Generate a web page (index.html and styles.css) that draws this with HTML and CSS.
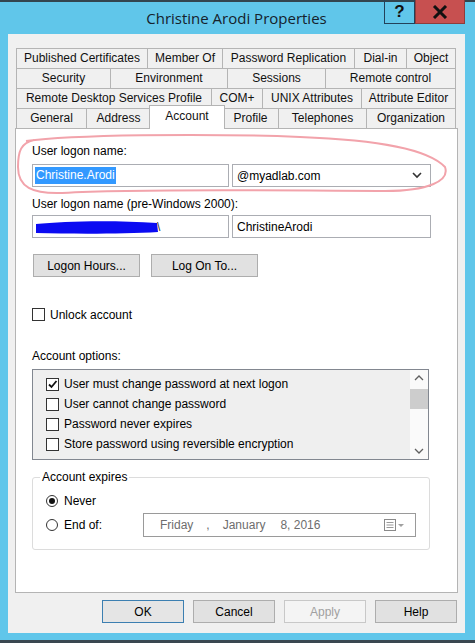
FILE: index.html
```html
<!DOCTYPE html>
<html>
<head>
<meta charset="utf-8">
<title>Christine Arodi Properties</title>
<link rel="stylesheet" href="styles.css">
</head>
<body>
<div class="window">
  <div class="titlebar">
    <span class="title">Christine Arodi Properties</span>
    <div class="caption-btns">
      <div class="cap help">?</div>
      <div class="cap close">
        <svg width="16" height="14" viewBox="0 0 16 14"><path d="M2 1 L14 13 M14 1 L2 13" stroke="#111" stroke-width="3"/></svg>
      </div>
    </div>
  </div>

  <div class="client">
    <div class="tabs">
      <div class="tabrow r1">
        <div class="tab">Published Certificates</div>
        <div class="tab">Member Of</div>
        <div class="tab">Password Replication</div>
        <div class="tab">Dial-in</div>
        <div class="tab">Object</div>
      </div>
      <div class="tabrow r2">
        <div class="tab">Security</div>
        <div class="tab">Environment</div>
        <div class="tab">Sessions</div>
        <div class="tab">Remote control</div>
      </div>
      <div class="tabrow r3">
        <div class="tab">Remote Desktop Services Profile</div>
        <div class="tab">COM+</div>
        <div class="tab">UNIX Attributes</div>
        <div class="tab">Attribute Editor</div>
      </div>
      <div class="tabrow r4">
        <div class="tab">General</div>
        <div class="tab">Address</div>
        <div class="tab selected">Account</div>
        <div class="tab">Profile</div>
        <div class="tab">Telephones</div>
        <div class="tab">Organization</div>
      </div>
    </div>

    <div class="panel">
      <div class="label l1">User logon name:</div>
      <div class="field-row fr1">
        <div class="textbox tb-left"><span class="sel">Christine.Arodi</span></div>
        <div class="textbox combo">
          <span>@myadlab.com</span>
          <svg class="chev" width="10" height="7" viewBox="0 0 10 7"><path d="M1 1 L5 5 L9 1" fill="none" stroke="#333" stroke-width="1.6"/></svg>
        </div>
      </div>

      <div class="label l2">User logon name (pre-Windows 2000):</div>
      <div class="field-row fr2">
        <div class="textbox tb-left domain">
          <svg class="scribble" width="126" height="18" viewBox="0 0 126 18"><path d="M2 5 C30 2, 80 1, 123 4 L124 13 C90 15, 40 15, 2 14 Z" fill="#0b0bf2"/></svg>
          <span class="bslash">\</span>
        </div>
        <div class="textbox"><span>ChristineArodi</span></div>
      </div>

      <div class="btn-row">
        <div class="btn wide">Logon Hours...</div>
        <div class="btn wide">Log On To...</div>
      </div>

      <div class="check-row unlock">
        <span class="cb"></span><span>Unlock account</span>
      </div>

      <div class="label l3">Account options:</div>
      <div class="listbox">
        <div class="items">
          <div class="item"><span class="cb checked"><svg width="11" height="11" viewBox="0 0 11 11"><path d="M2 5.5 L4.5 8 L9.5 2" fill="none" stroke="#111" stroke-width="1.8"/></svg></span><span>User must change password at next logon</span></div>
          <div class="item"><span class="cb"></span><span>User cannot change password</span></div>
          <div class="item"><span class="cb"></span><span>Password never expires</span></div>
          <div class="item"><span class="cb"></span><span>Store password using reversible encryption</span></div>
        </div>
        <div class="scrollbar">
          <svg class="arrow" width="18" height="16" viewBox="0 0 18 16"><path d="M5 10 L9 6 L13 10" fill="none" stroke="#606060" stroke-width="1.3"/></svg>
          <div class="thumb"></div>
          <div class="track"></div>
          <svg class="arrow" width="18" height="16" viewBox="0 0 18 16"><path d="M5 6 L9 10 L13 6" fill="none" stroke="#606060" stroke-width="1.3"/></svg>
        </div>
      </div>

      <fieldset class="group">
        <legend>Account expires</legend>
        <div class="radio-row never">
          <span class="rb checked"></span><span>Never</span>
        </div>
        <div class="radio-row endof">
          <span class="rb"></span><span class="endlabel">End of:</span>
          <div class="datepicker">
            <span class="d-day">Friday</span>
            <span class="d-comma">,</span>
            <span class="d-month">January</span>
            <span class="d-date">8, 2016</span>
            <span class="d-icon">
              <svg width="22" height="14" viewBox="0 0 22 14"><rect x="1.5" y="1.5" width="11" height="11" fill="#fff" stroke="#8a8a8a"/><path d="M3.5 4.5 H10.5 M3.5 7 H10.5 M3.5 9.5 H10.5" stroke="#9a9a9a"/><path d="M15 6 L21 6 L18 9 Z" fill="#a0a0a0"/></svg>
            </span>
          </div>
        </div>
      </fieldset>

      <svg class="annot" width="443" height="90" viewBox="15 127 443 90"><path d="M26 140 C70 134, 200 132, 300 136 C380 139, 428 148, 445 166 C450 180, 428 190, 385 190 C300 190, 150 187, 62 192 C32 193, 18 186, 18 166 C18 150, 21 142, 34 139" fill="none" stroke="#f2a3ab" stroke-width="2"/></svg>
    </div>

    <div class="dlg-buttons">
      <div class="btn dlg default">OK</div>
      <div class="btn dlg">Cancel</div>
      <div class="btn dlg disabled">Apply</div>
      <div class="btn dlg">Help</div>
    </div>
  </div>
</div>
</body>
</html>
```

FILE: styles.css
```css
* { box-sizing: border-box; }
html, body { margin: 0; padding: 0; }
body {
  width: 475px;
  height: 643px;
  overflow: hidden;
  background: #60c6ea;
  font-family: "Liberation Sans", Arial, sans-serif;
  font-size: 12px;
  color: #000;
}
.window {
  position: relative;
  width: 475px;
  height: 643px;
  background: #60c6ea;
  border-top: 2px solid #33454f;
  border-bottom: 3px solid #3a4750;
}
.titlebar {
  position: relative;
  height: 32px;
  display: flex;
  align-items: center;
  justify-content: center;
}
.title {
  font-family: "Open Sans", "Liberation Sans", sans-serif;
  font-size: 15px;
  color: #15222c;
  margin-left: -2px;
}
.caption-btns {
  position: absolute;
  top: -2px;
  right: 10px;
  display: flex;
}
.cap {
  height: 24px;
  display: flex;
  align-items: center;
  justify-content: center;
}
.cap.help {
  width: 31px;
  border: 1px solid #23415a;
  border-top: none;
  font-family: "Liberation Sans", sans-serif;
  font-weight: bold;
  font-size: 17px;
  color: #111;
}
.cap.close {
  width: 50px;
  background: #c75050;
  border: 1px solid #8e3c3c;
  border-top: none;
}

.client {
  margin-left: 8px;
  width: 457px;
  height: 599px;
  background: #f0f0f0;
  padding-top: 14px;
}
.tabs {
  margin-left: 8px;
  width: 439px;
}
.tabrow {
  display: grid;
  height: 20px;
  border-left: 1px solid #b4b4b4;
}
.r1 { grid-template-columns: 131px 75px 132px 52px 49px; }
.r2 { grid-template-columns: 94px 117px 98px 130px; }
.r3 { grid-template-columns: 195px 51px 99px 94px; }
.r4 { grid-template-columns: 70px 64px 72px 56px 88px 89px; }
.tab {
  border-top: 1px solid #b4b4b4;
  border-right: 1px solid #b4b4b4;
  background: #f0f0f0;
  text-align: center;
  line-height: 19px;
  white-space: nowrap;
  overflow: hidden;
  color: #111;
}
.tab.selected {
  position: relative;
  z-index: 2;
  background: #fff;
  margin: -3px -2px -1px -2px;
  border-left: 1px solid #b4b4b4;
  line-height: 20px;
}

.panel {
  position: relative;
  margin-left: 7px;
  width: 443px;
  height: 465px;
  background: #fff;
  border: 1px solid #b4b4b4;
  padding-left: 16px;
}
.label { line-height: 15px; }
.l1 { margin-top: 15px; }
.l2 { margin-top: 10px; }
.l3 { margin-top: 27px; }

.field-row {
  display: flex;
  gap: 3px;
}
.fr1 { margin-top: 5px; }
.fr2 { margin-top: 3px; }
.textbox {
  position: relative;
  width: 199px;
  height: 23px;
  border: 1px solid #abadb3;
  background: #fff;
  display: flex;
  align-items: center;
  padding-left: 4px;
}
.tb-left { width: 197px; padding-left: 2px; }
.sel {
  background: #3399ff;
  color: #fff;
  line-height: 17px;
  padding: 0 1px;
}
.combo { justify-content: space-between; padding-right: 8px; }
.domain { padding-left: 0; }
.scribble { position: absolute; left: 1px; top: 3px; }
.bslash { position: absolute; left: 124px; top: 4px; color: #333; }

.btn {
  height: 23px;
  border: 1px solid #adadad;
  background: #e1e1e1;
  display: flex;
  align-items: center;
  justify-content: center;
}
.btn-row {
  display: flex;
  gap: 11px;
  margin-top: 16px;
  padding-left: 1px;
}
.btn.wide { width: 107px; }

.check-row {
  display: flex;
  align-items: center;
  gap: 5px;
  height: 15px;
}
.unlock { margin-top: 30px; }
.cb {
  width: 13px;
  height: 13px;
  border: 1px solid #333;
  background: #fff;
  display: flex;
  align-items: center;
  justify-content: center;
  flex: none;
}

.listbox {
  margin-top: 5px;
  width: 397px;
  height: 91px;
  border: 1px solid #828790;
  background: #efefef;
  display: flex;
}
.items {
  flex: 1;
  padding: 4px 0 0 13px;
}
.item {
  display: flex;
  align-items: center;
  gap: 5px;
  height: 20px;
}
.scrollbar {
  width: 18px;
  background: #fafafa;
  display: flex;
  flex-direction: column;
}
.scrollbar .arrow { display: block; flex: none; }
.thumb {
  height: 20px;
  background: #cdcdcd;
  margin-top: 3px;
}
.track { flex: 1; }

.group {
  margin: 11px 0 0 0;
  width: 398px;
  height: 79px;
  border: 1px solid #dcdcdc;
  border-radius: 3px;
  padding: 0 0 0 13px;
}
.group legend {
  padding: 0 2px;
  margin-left: -6px;
  line-height: 13px;
}
.radio-row {
  display: flex;
  align-items: center;
  gap: 6px;
}
.never { margin-top: 9px; height: 16px; }
.endof { margin-top: 4px; height: 24px; }
.rb {
  width: 12px;
  height: 12px;
  border: 1px solid #333;
  border-radius: 50%;
  background: #fff;
  display: flex;
  align-items: center;
  justify-content: center;
  flex: none;
}
.rb.checked::after {
  content: "";
  width: 6px;
  height: 6px;
  border-radius: 50%;
  background: #111;
}
.endlabel { width: 73px; }
.datepicker {
  width: 273px;
  height: 24px;
  border: 1px solid #9a9a9a;
  background: #fff;
  display: flex;
  align-items: center;
  color: #6d6d6d;
  padding-left: 16px;
}
.d-comma { margin-left: 13px; }
.d-month { margin-left: 13px; }
.d-date { margin-left: 15px; }
.d-icon { margin-left: auto; margin-right: 10px; display: flex; }

.annot {
  position: absolute;
  left: -1px;
  top: -1px;
  pointer-events: none;
}

.dlg-buttons {
  display: flex;
  justify-content: flex-end;
  gap: 9px;
  margin-top: 7px;
  padding-right: 8px;
}
.btn.dlg { width: 82px; }
.btn.default { border-color: #3c7fb1; background: #e5e5e5; }
.btn.disabled { background: #f4f4f4; border-color: #c8c8c8; color: #a0a0a0; }
```
